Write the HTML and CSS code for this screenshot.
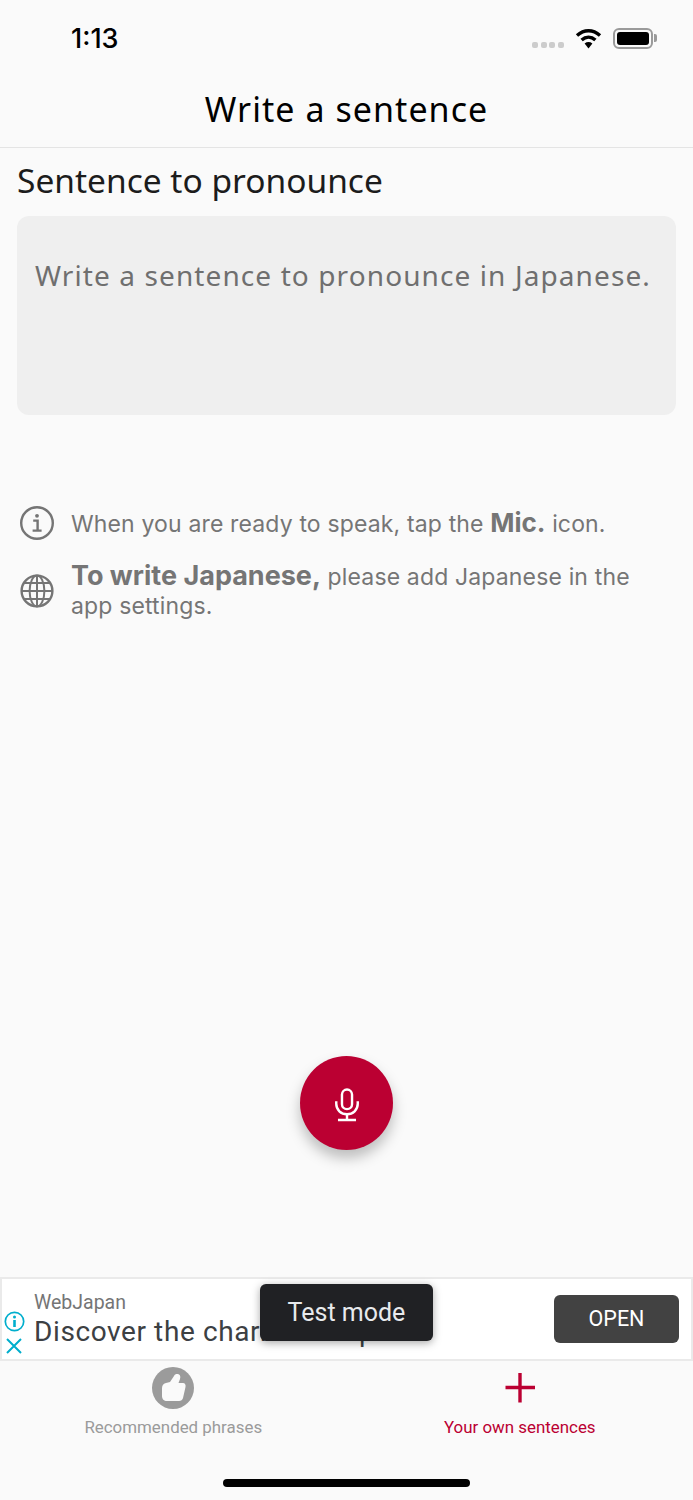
FILE: index.html
```html
<!DOCTYPE html>
<html lang="en">
<head>
    <meta charset="UTF-8">
    <meta name="viewport" content="width=device-width, initial-scale=1.0">
    <title>Write a sentence</title>
    <link rel="stylesheet" href="styles.css">
</head>
<body>

    <div class="app">
        <div class="status-bar">
            <span class="status-time">1:13</span>
            <div class="status-icons">
                <div class="signal-dots"><i></i><i></i><i></i><i></i></div>
                <svg class="wifi-icon" width="27" height="21" viewBox="0 0 27 21">
                    <path d="M2 7.5C9 1.2 18 1.2 25 7.5" fill="none" stroke="#000" stroke-width="3.4"/>
                    <path d="M6.6 12C10.8 8.2 16.2 8.2 20.4 12" fill="none" stroke="#000" stroke-width="3.4"/>
                    <path d="M13.5 20.5L9.6 15.4C12 13.6 15 13.6 17.4 15.4Z" fill="#000"/>
                </svg>
                <div class="battery"><div class="battery-fill"></div></div>
            </div>
        </div>

        <header class="nav-bar">
            <h1>Write a sentence</h1>
        </header>

        <main class="content">
            <h2>Sentence to pronounce</h2>
            <div class="sentence-box">Write a sentence to pronounce in Japanese.</div>

            <div class="hint-row hint-first">
                <svg width="36" height="36" viewBox="0 0 36 36" fill="none" stroke="#757575">
                    <circle cx="18" cy="18" r="15.8" stroke-width="2.4"/>
                    <circle cx="18" cy="10.8" r="1.9" fill="#757575" stroke="none"/>
                    <path d="M14.2 15.6H18.6V25.4M13.6 25.6H22.6" stroke-width="2.4"/>
                </svg>
                <p>When you are ready to speak, tap the <b class="hint-mic">Mic.</b> icon.</p>
            </div>
            <div class="hint-row hint-second">
                <svg width="36" height="36" viewBox="0 0 36 36" fill="none" stroke="#757575" stroke-width="2">
                    <circle cx="18" cy="18" r="15.4" stroke-width="2.4"/>
                    <ellipse cx="18" cy="18" rx="7.4" ry="15.4"/>
                    <path d="M18 2.6V33.4M2.6 18H33.4M5 10H31M5 26H31"/>
                </svg>
                <p><b>To write Japanese,</b> please add Japanese in the app settings.</p>
            </div>

            <div class="mic-wrap">
                <button class="mic-button" type="button">
                    <svg class="mic-icon" width="26" height="36" viewBox="0 0 30 40" fill="none" stroke="#fff" stroke-width="2.8">
                        <rect x="9.2" y="2.2" width="11.6" height="22.6" rx="5.8"/>
                        <path d="M2.6 15.6V18.6C2.6 25.6 8 30.6 15 30.6C22 30.6 27.4 25.6 27.4 18.6V15.6"/>
                        <path d="M15 30.6V37M4.6 37.4H25.4"/>
                    </svg>
                </button>
            </div>
        </main>

        <div class="ad-banner">
            <div class="ad-icons">
                <svg width="21" height="21" viewBox="0 0 21 21" fill="none" stroke="#00aecd">
                    <circle cx="10.5" cy="10.5" r="9.2" stroke-width="1.7"/>
                    <circle cx="10.5" cy="6" r="1.5" fill="#00aecd" stroke="none"/>
                    <path d="M10.5 9V16" stroke-width="2.6"/>
                </svg>
                <svg width="16" height="16" viewBox="0 0 16 16" fill="none" stroke="#00aecd" stroke-width="2">
                    <path d="M1 1L15 15M15 1L1 15"/>
                </svg>
            </div>
            <div class="ad-text">
                <div class="ad-name">WebJapan</div>
                <div class="ad-title">Discover the charm of Japan</div>
            </div>
            <button class="ad-open" type="button">OPEN</button>
            <div class="test-toast">Test mode</div>
        </div>

        <nav class="tab-bar">
            <div class="tab">
                <svg width="42" height="42" viewBox="0 0 42 42">
                    <circle cx="21" cy="21" r="21" fill="#9b9b9b"/>
                    <path d="M10 21C10 18 12 16.5 14 16L18 15L22 9C23 7 25 6.5 27 7.5C28.5 8.5 28.5 10 28 12L26.5 16H31C33 16 34 18 33.5 20L31 31C30.5 33 29 34 27 34H15C12 34 10 32 10 29Z" fill="#fafafa"/>
                </svg>
                <span>Recommended phrases</span>
            </div>
            <div class="tab tab-active">
                <svg width="42" height="42" viewBox="0 0 42 42" fill="none" stroke="#bb0032" stroke-width="3.4">
                    <path d="M21 6V35.5M6.5 20.5H36"/>
                </svg>
                <span>Your own sentences</span>
            </div>
            <div class="home-indicator"></div>
        </nav>
    </div>

</body>
</html>
```

FILE: styles.css
```css
* {
    box-sizing: border-box;
}

body {
    font-family: "Roboto", sans-serif;
    background-color: #fafafa;
    margin: 0;
    padding: 0;
}

.app {
    display: flex;
    flex-direction: column;
    height: 1500px;
    overflow: hidden;
}

.status-bar {
    display: flex;
    justify-content: space-between;
    align-items: center;
    height: 70px;
    padding: 6px 40px 0 71px;
    flex-shrink: 0;
}

.status-time {
    font-family: "Inter", sans-serif;
    font-size: 27px;
    font-weight: 500;
    color: #000;
}

.status-icons {
    display: flex;
    align-items: center;
}

.signal-dots {
    display: flex;
    gap: 2.6px;
    margin: 14px 11px 0 0;
}

.signal-dots i {
    width: 6px;
    height: 6px;
    border-radius: 2px;
    background-color: #ccc;
}

.wifi-icon {
    margin-right: 11px;
}

.battery {
    position: relative;
    width: 40px;
    height: 21px;
    padding: 2px;
    border: 2px solid #9a9a9a;
    border-radius: 6px;
}

.battery::after {
    content: "";
    position: absolute;
    top: 4px;
    right: -6px;
    width: 3px;
    height: 8px;
    background-color: #9a9a9a;
    border-radius: 0 2px 2px 0;
}

.battery-fill {
    height: 100%;
    background-color: #000;
    border-radius: 3px;
}

.nav-bar {
    display: flex;
    justify-content: center;
    align-items: center;
    height: 78px;
    border-bottom: 1px solid #e4e4e4;
    flex-shrink: 0;
}

h1 {
    margin: 0;
    font-family: "Noto Sans", sans-serif;
    font-size: 34px;
    font-weight: 400;
    letter-spacing: 1.05px;
    color: #000;
}

.content {
    display: flex;
    flex-direction: column;
    flex: 1;
    padding: 0 17px;
}

h2 {
    margin: 11px 0 15px;
    font-family: "Noto Sans", sans-serif;
    font-size: 33.5px;
    line-height: 42px;
    font-weight: 400;
    color: #1c1c1c;
}

.sentence-box {
    height: 199px;
    padding: 41px 18px 0;
    background-color: #efefef;
    border-radius: 12px;
    font-family: "Noto Sans", sans-serif;
    font-size: 28px;
    line-height: 36px;
    letter-spacing: 1.1px;
    color: #6f6f6f;
    white-space: nowrap;
}

.hint-row {
    display: flex;
    align-items: center;
    gap: 16px;
    margin-left: 2px;
}

.hint-first {
    margin-top: 90px;
}

.hint-second {
    margin-top: 20px;
}

.hint-row svg {
    flex-shrink: 0;
}

.hint-row p {
    margin: 0;
    font-family: "Inter", sans-serif;
    font-size: 23px;
    line-height: 29px;
    letter-spacing: 0.15px;
    color: #757575;
}

.hint-row b {
    font-size: 27px;
    letter-spacing: 0;
}

.hint-row .hint-mic {
    font-size: 26px;
}

.mic-wrap {
    display: flex;
    justify-content: center;
    margin-top: auto;
    padding-bottom: 127px;
}

.mic-button {
    display: flex;
    justify-content: center;
    align-items: center;
    width: 93px;
    height: 94px;
    padding: 0;
    border: none;
    border-radius: 50%;
    background-color: #bb0032;
    box-shadow: 0 8px 14px rgba(0, 0, 0, 0.25);
}

.mic-icon {
    margin-top: 4px;
}

.ad-banner {
    position: relative;
    display: flex;
    align-items: center;
    height: 84px;
    padding: 0 12px 0 2px;
    background-color: #fff;
    border: 2px solid #eaeaea;
    flex-shrink: 0;
}

.ad-icons {
    display: flex;
    flex-direction: column;
    align-items: center;
    gap: 6px;
    width: 20px;
    margin: 26px 10px 0 0;
}

.ad-text {
    flex: 1;
    white-space: nowrap;
}

.ad-name {
    font-size: 19.5px;
    line-height: 26px;
    color: #757575;
}

.ad-title {
    font-size: 28px;
    line-height: 32px;
    letter-spacing: 0.6px;
    color: #3c4043;
}

.ad-open {
    width: 125px;
    height: 48px;
    padding: 0 0 2px;
    border: none;
    border-radius: 6px;
    background-color: #424242;
    color: #fff;
    font-family: "Roboto", sans-serif;
    font-size: 21.5px;
}

.test-toast {
    position: absolute;
    top: 5px;
    left: 258px;
    width: 173px;
    height: 57px;
    line-height: 57px;
    text-align: center;
    background-color: #202124;
    border-radius: 6px;
    box-shadow: 0 2px 8px rgba(0, 0, 0, 0.35);
    color: #e8eaed;
    font-size: 25px;
}

.tab-bar {
    position: relative;
    display: flex;
    height: 139px;
    padding-top: 6px;
    flex-shrink: 0;
}

.tab {
    display: flex;
    flex-direction: column;
    align-items: center;
    width: 50%;
    gap: 7px;
    font-size: 16.9px;
    line-height: 22px;
    color: #9b9b9b;
}

.tab-active {
    color: #bb0032;
}

.home-indicator {
    position: absolute;
    left: 223px;
    bottom: 13px;
    width: 247px;
    height: 8px;
    background-color: #000;
    border-radius: 4px;
}
```
